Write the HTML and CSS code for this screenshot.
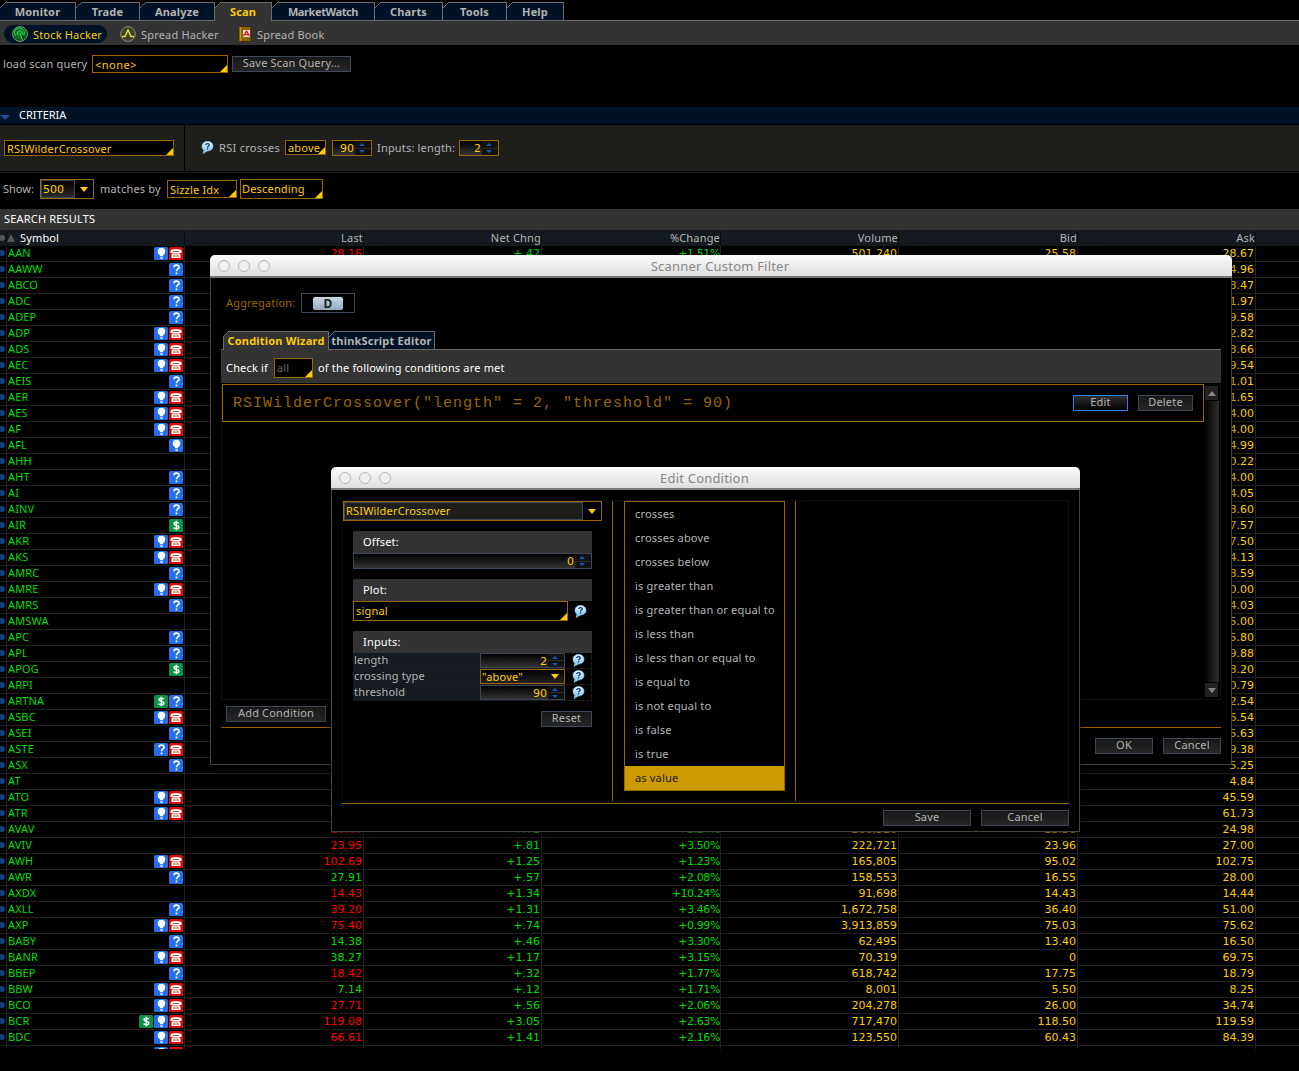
FILE: index.html
```
<!DOCTYPE html>
<html lang="en">
<head>
    <meta charset="UTF-8">
    <title>thinkorswim - Scan</title>
    <link rel="stylesheet" href="styles.css">
</head>
<body>
    <svg class="defs" width="0" height="0">
        <defs>
            <linearGradient id="bubbleFill" x1="0" y1="0" x2="0" y2="1">
                <stop offset="0" stop-color="#e8f8ff"/>
                <stop offset="1" stop-color="#6cb8f0"/>
            </linearGradient>
            <radialGradient id="greenFill">
                <stop offset="0" stop-color="#0a9a2a"/>
                <stop offset="1" stop-color="#0c4a1c"/>
            </radialGradient>
            <symbol id="bubble" viewBox="0 0 13 13">
                <path d="M6.5 .5C10 .5 12 2.6 12 5.3S9.8 10 6.5 10L2 12.6 3 9.2C1.6 8.3 1 7 1 5.3 1 2.6 3.2 .5 6.5 .5Z" fill="url(#bubbleFill)" stroke="#8fd0f8" stroke-width=".6"/>
                <path d="M4.7 4C4.8 2.1 8.3 2.1 8.3 4 8.3 5.1 6.5 5 6.5 6.4M6.5 7.3V8.5" fill="none" stroke="#113a66" stroke-width="1.3"/>
            </symbol>
            <symbol id="bulb" viewBox="0 0 14 13">
                <rect width="14" height="13" rx="1.5" fill="#286eea"/>
                <circle cx="7.5" cy="4.5" r="3.7" fill="#fff"/>
                <path d="M6 7H9V9H6ZM6 9.7H9V10.5H6ZM6.5 11H8.5V12H6.5Z" fill="#fff"/>
                <path d="M5.5 4.5Q5.5 2.7 7 2.5" fill="none" stroke="#9cc0ff" stroke-width=".8"/>
            </symbol>
            <symbol id="phone" viewBox="0 0 14 13">
                <rect width="14" height="13" rx="1.5" fill="#dc0a0a"/>
                <path d="M1.5 6V3.8Q2 2 7 2T12.5 3.8V6H9.8V4.3H4.2V6Z" fill="#fff"/>
                <path d="M4.5 5H9.5L11.5 8V11H2.5V8Z" fill="#fff"/>
                <path d="M5 6.7H9M4.5 8.3H9.5M4.5 9.7H9.5" stroke="#dc0a0a" stroke-width=".8" stroke-dasharray="1.2 .7"/>
            </symbol>
            <symbol id="quest" viewBox="0 0 14 13">
                <rect width="14" height="13" rx="1.5" fill="#286eea"/>
                <path d="M5 4.3Q5 2.2 7.5 2.2T10 4.3C10 6 7.5 5.8 7.5 8.3M7.5 9.5V11.2" fill="none" stroke="#fff" stroke-width="1.7"/>
            </symbol>
            <symbol id="dollar" viewBox="0 0 14 13">
                <rect width="14" height="13" rx="1.5" fill="#0a9347"/>
                <path d="M9.8 4.3Q9 3.3 7.3 3.3 5 3.3 5 4.8 5 6 7.3 6.4 9.8 6.8 9.8 8.2 9.8 9.7 7.3 9.7 5.3 9.7 4.5 8.6M7.3 1.7V11.3" fill="none" stroke="#fff" stroke-width="1.4"/>
            </symbol>
        </defs>
    </svg>

    <nav class="tabs main-tabs">
        <div class="tab t-monitor">Monitor</div>
        <div class="tab t-trade">Trade</div>
        <div class="tab t-analyze">Analyze</div>
        <div class="tab t-scan active">Scan</div>
        <div class="tab t-watch">MarketWatch</div>
        <div class="tab t-charts">Charts</div>
        <div class="tab t-tools">Tools</div>
        <div class="tab t-help">Help</div>
    </nav>

    <div class="subnav">
        <div class="sub active">
            <svg width="16" height="16" viewBox="0 0 16 16">
                <circle cx="8" cy="8" r="7.4" fill="url(#greenFill)" stroke="#7f9a80"/>
                <path d="M3.5 10A5 5 0 1 1 12 9M6 9A2.5 2.5 0 1 1 9 9.5" fill="none" stroke="#2be04c" stroke-width="1"/>
                <path d="M8 7.5L13 11.5L10.5 14Z" fill="#0a3a14"/>
                <path d="M8 7.5L10.5 14" stroke="#2be04c"/>
            </svg>
            <span>Stock Hacker</span>
        </div>
        <div class="sub spread">
            <svg width="16" height="16" viewBox="0 0 16 16">
                <circle cx="8" cy="8" r="7.4" fill="#3c4224" stroke="#8a8d78"/>
                <path d="M2 10.5H5L8 4L11 10.5H14" fill="none" stroke="#f5d84a" stroke-width="1.4"/>
            </svg>
            <span>Spread Hacker</span>
        </div>
        <div class="sub book">
            <svg width="14" height="16" viewBox="0 0 14 16">
                <rect x=".5" y=".5" width="12.5" height="15" rx="1" fill="#8a6508" stroke="#3a2a08"/>
                <path d="M2.5 1V15" stroke="#c79a2c"/>
                <rect x="5" y="4" width="7" height="7" fill="#e8e0d8"/>
                <path d="M5.5 10L8.5 5L11.5 10M7 8.5H10" fill="none" stroke="#d01818" stroke-width="1.3"/>
            </svg>
            <span>Spread Book</span>
        </div>
    </div>

    <div class="query">
        <span class="lbl">load scan query</span>
        <div class="select q-select">&lt;none&gt;</div>
        <div class="btn q-save">Save Scan Query...</div>
    </div>

    <div class="criteria-head"><i class="tri-down"></i><span>CRITERIA</span></div>
    <div class="criteria">
        <div class="crit-name"><div class="select">RSIWilderCrossover</div></div>
        <div class="crit-body">
            <svg class="bubble" width="13" height="13"><use href="#bubble"/></svg>
            <span class="w-rsi">RSI crosses</span>
            <div class="select above">above</div>
            <div class="spin gold"><b>90</b><i class="arrows"></i></div>
            <span class="w-inputs">Inputs: length:</span>
            <div class="spin gold"><b>2</b><i class="arrows"></i></div>
        </div>
    </div>

    <div class="show">
        <span class="w-show">Show:</span>
        <div class="combo count"><b>500</b><i class="drop"></i></div>
        <span class="w-matches">matches by</span>
        <div class="select sizzle">Sizzle Idx</div>
        <div class="select desc">Descending</div>
    </div>

    <div class="results-title">SEARCH RESULTS</div>
    <div class="results" id="results">
        <div class="row head">
            <div class="dot"></div>
            <div class="sym"><i class="sort"></i><span>Symbol</span></div>
            <div>Last</div><div>Net Chng</div><div>%Change</div><div>Volume</div><div>Bid</div><div>Ask</div><div></div>
        </div>
    </div>

    <div class="window filter">
        <div class="titlebar"><i></i><i></i><i></i><span>Scanner Custom Filter</span></div>
        <div class="win-body">
            <div class="agg"><span>Aggregation:</span><div class="agg-box"><b>D</b></div></div>
            <div class="tabs filter-tabs">
                <div class="tab active">Condition Wizard</div>
                <div class="tab">thinkScript Editor</div>
            </div>
            <div class="check">
                <span class="w-check">Check if</span>
                <div class="select all">all</div>
                <span class="w-met">of the following conditions are met</span>
            </div>
            <div class="conditions">
                <div class="cond">
                    <code>RSIWilderCrossover("length" = 2, "threshold" = 90)</code>
                    <div class="btn focus">Edit</div>
                    <div class="btn">Delete</div>
                </div>
                <div class="scroll"><i class="up"></i><i class="down"></i></div>
            </div>
            <div class="add"><div class="btn">Add Condition</div></div>
            <div class="actions"><div class="btn">OK</div><div class="btn">Cancel</div></div>
        </div>
    </div>

    <div class="window edit">
        <div class="titlebar"><i></i><i></i><i></i><span>Edit Condition</span></div>
        <div class="win-body">
            <div class="panes">
                <div class="pane-left">
                    <div class="combo study"><b>RSIWilderCrossover</b><i class="drop"></i></div>
                    <div class="group">
                        <h4>Offset:</h4>
                        <div class="spin"><b>0</b><i class="arrows"></i></div>
                    </div>
                    <div class="group">
                        <h4>Plot:</h4>
                        <div class="plot-row"><div class="select">signal</div><svg width="13" height="13"><use href="#bubble"/></svg></div>
                    </div>
                    <div class="group">
                        <h4>Inputs:</h4>
                        <div class="input-row"><span>length</span><div class="spin"><b>2</b><i class="arrows"></i></div><svg width="13" height="13"><use href="#bubble"/></svg></div>
                        <div class="input-row"><span>crossing type</span><div class="combo type"><b>"above"</b><i class="drop"></i></div><svg width="13" height="13"><use href="#bubble"/></svg></div>
                        <div class="input-row"><span>threshold</span><div class="spin"><b>90</b><i class="arrows"></i></div><svg width="13" height="13"><use href="#bubble"/></svg></div>
                    </div>
                    <div class="btn reset">Reset</div>
                </div>
                <div class="pane-mid">
                    <ul>
                        <li>crosses</li>
                        <li>crosses above</li>
                        <li>crosses below</li>
                        <li>is greater than</li>
                        <li>is greater than or equal to</li>
                        <li>is less than</li>
                        <li>is less than or equal to</li>
                        <li>is equal to</li>
                        <li>is not equal to</li>
                        <li>is false</li>
                        <li>is true</li>
                        <li class="picked">as value</li>
                    </ul>
                </div>
            </div>
            <div class="actions"><div class="btn">Save</div><div class="btn">Cancel</div></div>
        </div>
    </div>

    <script src="results.js"></script>
</body>
</html>
```
FILE: results.js
```
// symbol | icons | last | net | % | volume | bid | ask
// icons: d = dividend, b = bulb, p = phone, q = question
const rows = `
AAN|bp|-28.16|+.42|+1.51%|501,240|25.58|28.67
AAWW|q||||||4.96
ABCO|q||||||3.47
ADC|q||||||1.97
ADEP|q||||||9.58
ADP|bp||||||2.82
ADS|bp||||||3.66
AEC|bp||||||9.54
AEIS|q||||||1.01
AER|bp||||||1.65
AES|bp||||||4.00
AF|bp||||||4.00
AFL|b||||||4.99
AHH|||||||0.22
AHT|q||||||4.00
AI|q||||||4.05
AINV|q||||||8.60
AIR|d||||||7.57
AKR|bp||||||7.50
AKS|bp||||||4.13
AMRC|q||||||8.59
AMRE|bp||||||0.00
AMRS|q||||||4.03
AMSWA|||||||5.00
APC|q||||||5.80
APL|q||||||9.88
APOG|d||||||8.20
ARPI|||||||0.79
ARTNA|dq||||||2.54
ASBC|bp||||||6.54
ASEI|q||||||5.63
ASTE|qp||||||9.38
ASX|q||||||5.25
AT|||||||4.84
ATO|bp||||||45.59
ATR|bp||||||61.73
AVAV||-26.60|+.72|+3.24%|206,520|23.50|24.98
AVIV||-23.95|+.81|+3.50%|222,721|23.96|27.00
AWH|bp|-102.69|+1.25|+1.23%|165,805|95.02|102.75
AWR|q|27.91|+.57|+2.08%|158,553|16.55|28.00
AXDX||-14.43|+1.34|+10.24%|91,698|14.43|14.44
AXLL|q|-39.20|+1.31|+3.46%|1,672,758|36.40|51.00
AXP|bp|-75.40|+.74|+0.99%|3,913,859|75.03|75.62
BABY|q|14.38|+.46|+3.30%|62,495|13.40|16.50
BANR|bp|38.27|+1.17|+3.15%|70,319|0|69.75
BBEP|q|-18.42|+.32|+1.77%|618,742|17.75|18.79
BBW|bp|7.14|+.12|+1.71%|8,001|5.50|8.25
BCO|bp|-27.71|+.56|+2.06%|204,278|26.00|34.74
BCR|dbp|-119.08|+3.05|+2.63%|717,470|118.50|119.59
BDC|bp|-66.61|+1.41|+2.16%|123,550|60.43|84.39
|bp||||||`.trim().split('\n');

const icons = { d: 'dollar', b: 'bulb', p: 'phone', q: 'quest' };
const results = document.getElementById('results');

rows.forEach(line => {
    const [sym, marks, last, net, pct, vol, bid, ask] = line.split('|');
    const pics = [...marks]
        .map(m => `<svg width="14" height="13"><use href="#${icons[m]}"/></svg>`).join('');
    const row = document.createElement('div');
    row.className = 'row';
    row.innerHTML = `<div class="dot"></div><div class="sym"><span>${sym}</span>${pics}</div>
        <div class="${last[0] === '-' ? 'down' : 'up'}">${last.replace('-', '')}</div>
        <div class="up">${net}</div><div class="up pct">${pct}</div>
        <div>${vol}</div><div>${bid}</div><div>${ask}</div><div></div>`;
    results.appendChild(row);
});
```
FILE: styles.css
```
* {
    box-sizing: border-box;
}
body {
    margin: 0;
    height: 1071px;
    overflow: hidden;
    position: relative;
    background: #000;
    color: #b4b4b4;
    font: 11px/14px "Noto Sans", sans-serif;
    letter-spacing: 0.18px;
    white-space: nowrap;
}
.defs {
    position: absolute;
}
b {
    font-weight: normal;
}
svg {
    display: block;
    flex: none;
}

/* tabs */
.tabs {
    display: flex;
}
.main-tabs {
    height: 21px;
    padding-top: 2px;
    border-bottom: 1px solid #6b6b6b;
}
.tab {
    position: relative;
    height: 18px;
    background: #001226;
    border-top: 1px solid #6b6b6b;
    border-right: 1px solid #6b6b6b;
    font-weight: bold;
    line-height: 18px;
    text-align: center;
}
.tab::before {
    content: "";
    position: absolute;
    left: 0;
    top: -1px;
    width: 6px;
    height: 6px;
    background: linear-gradient(135deg, #000 42%, #6b6b6b 42% 56%, transparent 56%);
}
.tab.active {
    height: 19px;
    background: #333;
    color: #fc0;
}
.t-monitor { width: 76px; }
.t-trade { width: 64px; }
.t-analyze { width: 75px; }
.t-scan { width: 57px; }
.t-watch { width: 103px; letter-spacing: -0.4px; }
.t-charts { width: 68px; }
.t-tools { width: 64px; }
.t-help { width: 57px; }

.subnav {
    display: flex;
    align-items: center;
    height: 24px;
    padding: 2px 0 0 4px;
    background: #333;
}
.sub {
    display: flex;
    align-items: center;
    gap: 5px;
    height: 18px;
    padding-left: 8px;
}
.sub span {
    padding-top: 1px;
}
.sub.active {
    width: 103px;
    border-radius: 9px;
    background: #001226;
    color: #fc0;
}
.sub.spread {
    width: 118px;
    padding-left: 13px;
}
.sub.book {
    padding-left: 13px;
}

/* form controls */
.select {
    position: relative;
    border: 1px solid #960;
    background: #000;
    color: #fc0;
    padding-left: 2px;
}
.select::after {
    content: "";
    position: absolute;
    right: 0;
    bottom: 0;
    border-left: 7px solid transparent;
    border-bottom: 7px solid #fc0;
}
.btn {
    height: 16px;
    border: 1px solid #3c4858;
    background: linear-gradient(#181818, #262626);
    line-height: 12px;
    text-align: center;
}
.btn.focus {
    border-color: #2a7fe8;
    background: linear-gradient(#303030, #000);
}
.spin {
    display: flex;
    height: 16px;
    border: 1px solid #3c4858;
    background: linear-gradient(#000, #333);
    color: #fc0;
    font-family: "DejaVu Sans", sans-serif;
    letter-spacing: 0;
    line-height: 15px;
}
.spin.gold {
    width: 40px;
    border-color: #960;
}
.spin b {
    flex: 1;
    text-align: right;
    padding-right: 1px;
}
.arrows {
    position: relative;
    width: 16px;
    background: linear-gradient(#111 0 48%, #2b2b2b 48% 56%, #111 56%);
}
.arrows::before,
.arrows::after {
    content: "";
    position: absolute;
    left: 4px;
    top: 2px;
    border: 3px solid transparent;
    border-top: 0;
    border-bottom: 3px solid #1459b8;
}
.arrows::after {
    top: 9px;
    border-top: 3px solid #1459b8;
    border-bottom: 0;
}
.combo {
    display: flex;
    border: 1px solid #960;
    color: #fc0;
    background: #000;
}
.combo b {
    flex: 1;
    border: 1px solid #3c4858;
    padding-left: 1px;
}
.drop {
    display: flex;
    width: 18px;
    align-items: center;
    justify-content: center;
}
.drop::before {
    content: "";
    border: 4px solid transparent;
    border-top: 5px solid #fc0;
    border-bottom: 0;
}

/* scan query and criteria */
.query {
    display: flex;
    height: 62px;
    padding: 10px 0 0 3px;
}
.query .lbl {
    width: 89px;
    line-height: 18px;
}
.q-select {
    width: 136px;
    height: 18px;
    margin-right: 4px;
    line-height: 18px;
    letter-spacing: 0.5px;
}
.q-save {
    width: 119px;
    margin-top: 1px;
}
.criteria-head {
    display: flex;
    align-items: center;
    height: 17px;
    background: #001226;
    color: #fff;
    margin-bottom: 1px;
}
.criteria-head span {
    padding-bottom: 2px;
    letter-spacing: 0;
}
.tri-down {
    border: 5px solid transparent;
    border-top: 5px solid #1c4f96;
    border-bottom: 0;
    margin: 4px 9px 0 0;
}
.criteria {
    display: flex;
    height: 46px;
    background: #1e1f1b;
    margin-bottom: 1px;
}
.crit-name {
    width: 185px;
    padding: 15px 0 0 4px;
    border-right: 1px solid #000;
}
.crit-name .select {
    width: 170px;
    height: 16px;
    line-height: 15px;
}
.crit-body {
    display: flex;
    padding: 15px 0 0 16px;
    line-height: 16px;
}
.crit-body .bubble {
    margin: 1px 5px 0 0;
}
.w-rsi {
    width: 66px;
    letter-spacing: 0.3px;
}
.above {
    width: 41px;
    height: 15px;
    margin-right: 6px;
    line-height: 13px;
}
.w-inputs {
    width: 87px;
    padding-left: 5px;
}
.show {
    display: flex;
    align-items: center;
    height: 37px;
    padding: 0 0 4px 3px;
    border-top: 1px solid #171717;
}
.w-show {
    width: 37px;
    letter-spacing: 0;
}
.count {
    width: 54px;
    height: 20px;
    font-family: "DejaVu Sans", sans-serif;
    line-height: 17px;
    letter-spacing: 0;
}
.count b {
    background: linear-gradient(#000, #2b2b2b);
}
.w-matches {
    width: 73px;
    padding-left: 6px;
}
.sizzle {
    width: 70px;
    height: 18px;
    line-height: 18px;
    margin-right: 3px;
}
.desc {
    width: 83px;
    height: 20px;
    line-height: 18px;
    padding-left: 1px;
}

/* search results */
.results-title {
    height: 21px;
    padding-left: 4px;
    background: #333;
    color: #fff;
    line-height: 20px;
}
.results {
    height: 819px;
    overflow: hidden;
}
.row {
    display: grid;
    grid-template-columns: 7px 178px 179px 178px 179px 178px 179px 178px 1fr;
    height: 16px;
    color: #fc0;
    font-family: "DejaVu Sans", sans-serif;
    letter-spacing: 0;
}
.row > div {
    height: 16px;
    border-right: 1px solid #222;
    border-bottom: 1px solid #222;
    padding-right: 1px;
    text-align: right;
    line-height: 15px;
}
.row > div:last-child {
    border-right: 0;
}
.row .dot {
    background: radial-gradient(circle at 2px 7px, #12417f 2px, #0a2a55 3px, transparent 3.5px);
}
.row .sym {
    display: flex;
    align-items: center;
    gap: 1px;
    color: #0d0;
    padding: 0 1px;
    font-family: "Noto Sans", sans-serif;
    letter-spacing: 0.15px;
}
.sym span {
    flex: 1;
    padding-bottom: 2px;
    text-align: left;
    line-height: 13px;
}
.row .up {
    color: #0d0;
}
.row .down {
    color: #f00;
}
.row .pct {
    padding-right: 0;
    letter-spacing: -0.4px;
}
.row.head {
    background: #141a20;
    color: #b4b4b4;
    font-family: "Noto Sans", sans-serif;
    letter-spacing: 0.18px;
}
.row.head > div {
    border-bottom: 0;
    border-right-color: #0a0d10;
    padding-right: 0;
    line-height: 16px;
}
.row.head .dot {
    background: radial-gradient(circle at 2px 8px, #555 2.5px, transparent 3.5px);
}
.row.head .sym {
    padding-left: 0;
    color: #fff;
}
.row.head .sym span {
    padding: 0;
    line-height: 16px;
}
.sort {
    border: 4px solid transparent;
    border-top: 0;
    border-bottom: 8px solid #555;
    margin-right: 4px;
}

/* floating windows */
.window {
    position: absolute;
    display: flex;
    flex-direction: column;
    box-shadow: 0 4px 8px rgba(0, 0, 0, 0.6);
    border-radius: 5px 5px 0 0;
}
.titlebar {
    position: relative;
    display: flex;
    align-items: center;
    gap: 8px;
    height: 23px;
    padding-left: 8px;
    border-radius: 5px 5px 0 0;
    background: linear-gradient(#fbfbfb, #dedede);
    border-bottom: 2px solid #777;
}
.titlebar i {
    width: 12px;
    height: 12px;
    border: 1.5px solid #b8b8b8;
    border-radius: 50%;
    background: #f0f0f0;
}
.titlebar span {
    position: absolute;
    left: 0;
    right: 2px;
    text-align: center;
    color: #888;
    font-size: 13px;
    letter-spacing: 0.2px;
}
.win-body {
    flex: 1;
    border: 1px solid #444;
    border-top: 0;
    background: #000;
}
.filter {
    left: 210px;
    top: 255px;
    width: 1022px;
    height: 510px;
}
.filter .win-body {
    padding: 15px 10px 0;
}
.agg {
    display: flex;
    align-items: center;
    padding-left: 5px;
    color: #960;
}
.agg span {
    width: 75px;
}
.agg-box {
    width: 54px;
    height: 20px;
    padding: 3px 11px;
    border: 1px solid #3c4858;
}
.agg-box b {
    display: block;
    height: 13px;
    border-radius: 2px;
    background: linear-gradient(#c9d8e8, #93a9c2);
    color: #222;
    font-size: 12px;
    font-weight: bold;
    line-height: 13px;
    text-align: center;
}
.filter-tabs {
    height: 19px;
    padding-left: 2px;
    margin-top: 18px;
    border-bottom: 1px solid #6b6b6b;
}
.filter-tabs .tab {
    width: 106px;
    line-height: 17px;
    letter-spacing: 0.2px;
}
.filter-tabs .tab.active {
    border-left: 1px solid #6b6b6b;
}
.filter-tabs .tab.active::before {
    left: -1px;
}
.check {
    display: flex;
    align-items: center;
    height: 33px;
    padding: 2px 0 0 5px;
    background: #333;
    color: #fff;
}
.w-check {
    width: 48px;
}
.all {
    width: 39px;
    height: 20px;
    margin-right: 5px;
    color: #666;
    line-height: 18px;
}
.conditions {
    display: flex;
    justify-content: space-between;
    height: 316px;
    margin-top: 1px;
    border: 1px solid #111;
    border-top: 0;
}
.cond {
    display: flex;
    align-items: center;
    width: 982px;
    height: 38px;
    padding: 0 10px;
    border: 1px solid #960;
}
.cond code {
    flex: 1;
    padding-top: 1px;
    color: #960;
    font: 15px "Liberation Mono", monospace;
    letter-spacing: 1px;
}
.cond .btn {
    width: 55px;
    margin-left: 10px;
}
.scroll {
    display: flex;
    flex-direction: column;
    justify-content: space-between;
    width: 15px;
    height: 313px;
    margin: 1px 1px 0 0;
    background: linear-gradient(90deg, #000, #2d2d2d);
}
.scroll i {
    display: flex;
    align-items: center;
    justify-content: center;
    height: 16px;
    border: 1px solid #000;
    background: #222;
}
.scroll i::before {
    content: "";
    border: 4px solid transparent;
    border-top: 0;
    border-bottom: 5px solid #888;
}
.scroll .down::before {
    border-top: 5px solid #888;
    border-bottom: 0;
}
.add {
    height: 28px;
    padding: 6px 0 0 5px;
    border-bottom: 1px solid #960;
}
.add .btn {
    width: 100px;
}
.actions {
    display: flex;
    justify-content: flex-end;
    gap: 10px;
    padding-top: 10px;
}
.filter .actions .btn {
    width: 58px;
}

/* edit condition window */
.edit {
    left: 331px;
    top: 467px;
    width: 749px;
    height: 365px;
}
.edit .win-body {
    padding: 10px 10px 0;
}
.panes {
    display: flex;
    height: 302px;
    border: 1px solid #0d0d0d;
}
.pane-left {
    width: 270px;
    height: 300px;
    border-right: 1px solid #960;
}
.study {
    width: 259px;
    height: 20px;
    line-height: 15px;
}
.study b {
    background: #1e1f1b;
}
.group {
    width: 239px;
    margin: 10px 0 0 10px;
}
.group h4 {
    height: 22px;
    margin: 0;
    padding-left: 10px;
    background: #333;
    color: #fff;
    font-weight: normal;
    line-height: 22px;
}
.plot-row {
    display: flex;
    align-items: center;
    gap: 6px;
}
.plot-row .select {
    width: 215px;
    height: 20px;
    line-height: 18px;
}
.input-row {
    display: flex;
    align-items: center;
    height: 16px;
    border-right: 1px solid #1a1a1a;
    border-bottom: 1px solid #1a1a1a;
}
.input-row span {
    width: 127px;
    height: 15px;
    padding-left: 1px;
    background: #141a20;
}
.input-row .spin,
.type {
    width: 85px;
    height: 15px;
    margin-right: 7px;
}
.input-row .spin {
    line-height: 16px;
}
.type {
    background: linear-gradient(#000, #222);
    line-height: 14px;
}
.type b {
    border: 0;
}
.reset {
    width: 51px;
    margin: 10px 0 0 198px;
}
.pane-mid {
    width: 183px;
    height: 300px;
    padding-left: 11px;
    border-right: 1px solid #960;
}
.pane-mid ul {
    width: 161px;
    margin: 0;
    padding: 0;
    border: 1px solid #960;
    list-style: none;
}
.pane-mid li {
    height: 24px;
    padding-left: 10px;
    line-height: 24px;
}
.pane-mid .picked {
    background: #c90;
    color: #222;
}
.edit .actions {
    margin-top: 1px;
    padding-top: 6px;
    border-top: 1px solid #960;
}
.edit .actions .btn {
    width: 88px;
}
```
